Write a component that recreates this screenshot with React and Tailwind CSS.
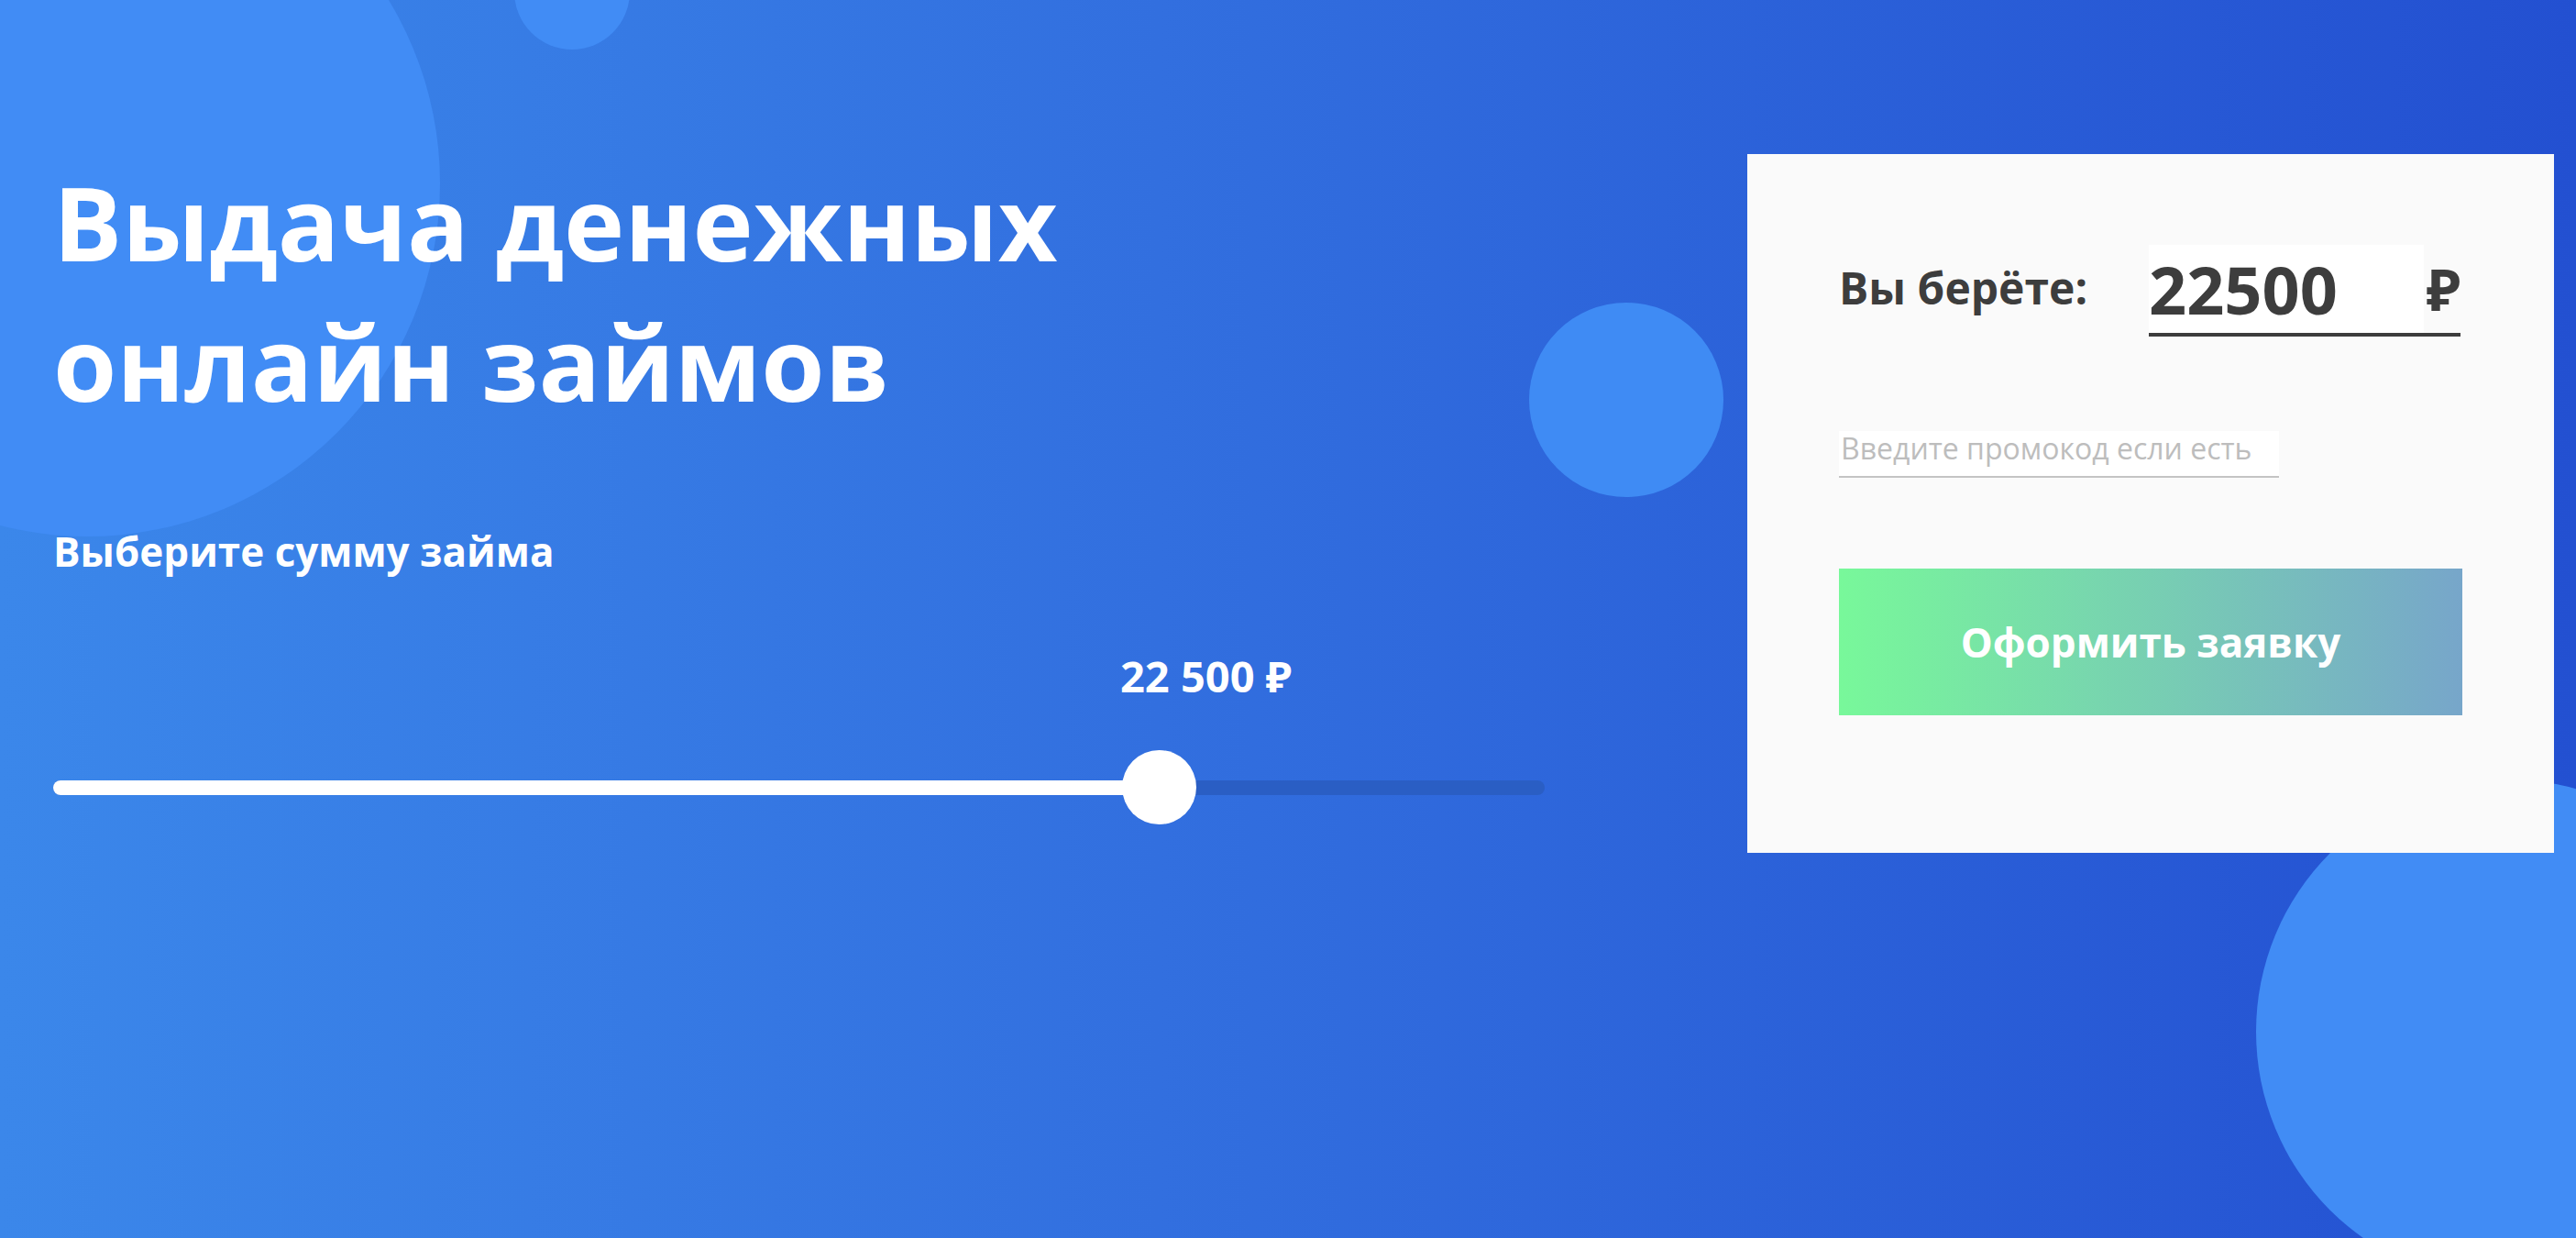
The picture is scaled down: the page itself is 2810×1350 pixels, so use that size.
import { useState } from "react"

const font = { fontFamily: '"Open Sans", "Noto Sans", sans-serif' }

const LoanSlider = ({ value, min, max }) => {
  const pct = ((value - min) / (max - min)) * 100
  return (
    <div className="relative h-[81px] w-full flex items-center">
      <div className="h-[16px] w-full rounded-full bg-[#2a5ec4] flex">
        <div className="h-full rounded-full bg-white" style={{ width: `${pct}%` }} />
      </div>
      <div
        className="absolute top-0 h-[81px] w-[81px] -ml-[40px] rounded-full bg-white"
        style={{ left: `${pct}%` }}
      />
    </div>
  )
}

const App = () => {
  const [amount, setAmount] = useState("22500")
  const [promo, setPromo] = useState("")

  return (
    <div
      className="relative w-full h-[1350px] overflow-hidden bg-[linear-gradient(90deg,#3b87ea_0%,#326fdf_45%,#2350d1_100%)]"
      style={font}
    >
      {/* decorative circles */}
      <div className="absolute left-[-290px] top-[-185px] h-[770px] w-[770px] rounded-full bg-[#418cf5]" />
      <div className="absolute left-[561px] top-[-72px] h-[126px] w-[126px] rounded-full bg-[#418cf5]" />
      <div className="absolute left-[1668px] top-[330px] h-[212px] w-[212px] rounded-full bg-[#3f8bf4]" />
      <div className="absolute left-[2461px] top-[850px] h-[550px] w-[550px] rounded-full bg-[#418cf5]" />

      <div className="relative flex justify-between pl-[58px] pr-[24px] pt-[165px]">
        <div className="w-[1627px] text-white">
          <h1 className="text-[112px] font-bold leading-[153px]">
            Выдача денежных
            <br />
            онлайн займов
          </h1>
          <p className="mt-[100px] text-[44px] font-bold leading-[1.4]">Выберите сумму займа</p>
          <div className="mt-[72px] pl-[1164px] text-[47px] font-bold leading-[1.4]">22 500 ₽</div>
          <div className="mt-[48px]">
            <LoanSlider value={22500} min={1000} max={30000} />
          </div>
        </div>

        <div className="mt-[3px] h-[762px] w-[880px] bg-[#fafafa] pl-[100px] pr-[100px] pt-[99px]">
          <div className="flex items-center">
            <span className="w-[338px] pb-[6px] text-[48px] font-bold text-[#3d3d3d]">Вы берёте:</span>
            <div className="flex items-center border-b-4 border-[#3d3d3d]">
              <input
                type="text"
                value={amount}
                onChange={(e) => setAmount(e.target.value)}
                className="h-[96px] w-[300px] bg-white text-[72px] font-bold text-[#3d3d3d] outline-none"
                style={font}
              />
              <span className="w-[40px] text-right text-[62px] font-bold text-[#3d3d3d]">₽</span>
            </div>
          </div>

          <input
            type="text"
            value={promo}
            onChange={(e) => setPromo(e.target.value)}
            placeholder="Введите промокод если есть"
            className="mt-[103px] block h-[51px] w-[480px] border-b-2 border-[#c4c4c4] bg-white pb-[13px] pl-[2px] text-[32px] text-[#3d3d3d] placeholder:text-[#bdbdbd] outline-none"
            style={font}
          />

          <button
            type="button"
            className="mt-[99px] flex h-[160px] w-[680px] items-center justify-center bg-[linear-gradient(90deg,#78f89a,#77a6ca)] text-[44px] font-bold text-white"
            style={font}
          >
            Оформить заявку
          </button>
        </div>
      </div>
    </div>
  )
}

export default App
